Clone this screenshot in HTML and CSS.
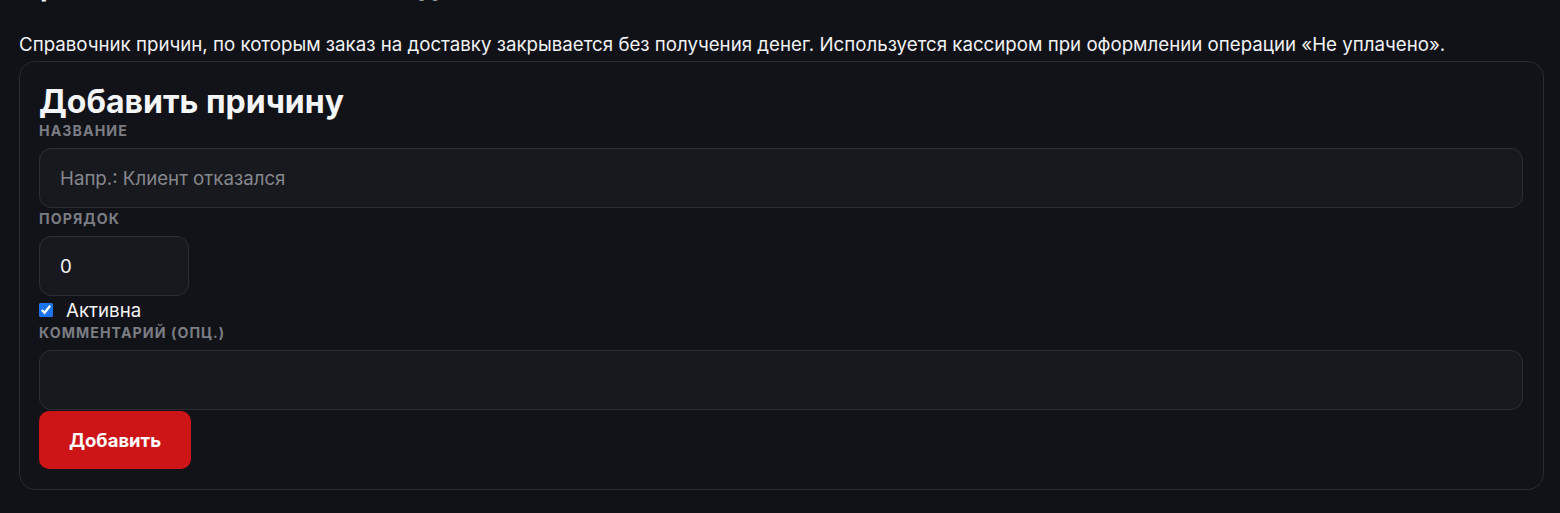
FILE: index.html
```html
<!DOCTYPE html>
<html lang="ru">
<head>
<meta charset="utf-8">
<title>Причины неоплаты</title>
<link rel="stylesheet" href="styles.css">
</head>
<body>
<main class="page">
  <h1 class="page-title">Причины неоплаты заказов доставки</h1>
  <p class="page-desc">Справочник причин, по которым заказ на доставку закрывается без получения денег. Используется кассиром при оформлении операции «Не уплачено».</p>
  <section class="card">
    <h2 class="card-title">Добавить причину</h2>
    <form class="form">
      <label class="field">
        <span class="field-label">Название</span>
        <input class="input" type="text" placeholder="Напр.: Клиент отказался">
      </label>
      <label class="field">
        <span class="field-label">Порядок</span>
        <input class="input input-short" type="text" value="0">
      </label>
      <label class="check">
        <input type="checkbox" checked>
        <span>Активна</span>
      </label>
      <label class="field">
        <span class="field-label">Комментарий (опц.)</span>
        <input class="input" type="text">
      </label>
      <div class="actions">
        <button type="button" class="btn-primary">Добавить</button>
      </div>
    </form>
  </section>
</main>
</body>
</html>
```
FILE: styles.css
```css
* { box-sizing: border-box; }
html, body {
  margin: 0;
  background: #111217;
  color: #f2f3f5;
  font-family: Inter, "Noto Sans", sans-serif;
}
.page {
  padding: 0 16px 0 19px;
}
.page-title {
  margin: -31px 0 0;
  font-size: 28px;
  line-height: 34px;
  font-weight: 700;
  color: #f2f3f5;
}
.page-desc {
  margin: 0;
  padding-top: 29px;
  font-size: 18.7px;
  line-height: 26px;
  color: #f2f3f5;
}
.card {
  margin-top: 3px;
  border: 1px solid #2a2b31;
  border-radius: 16px;
  background: #121318;
  padding: 20px 20px 20px 19px;
}
.card-title {
  margin: 0;
  font-size: 32px;
  line-height: 40px;
  font-weight: 700;
  color: #f4f5f7;
}
.form {
  display: flex;
  flex-direction: column;
  gap: 2px;
}
.field {
  display: flex;
  flex-direction: column;
  gap: 8px;
}
.field-label {
  font-size: 14.2px;
  line-height: 18px;
  font-weight: 700;
  letter-spacing: 0.075em;
  text-transform: uppercase;
  color: #7b7d84;
}
.input {
  height: 60px;
  width: 100%;
  border: 1px solid #2c2d33;
  border-radius: 12px;
  background: #18191e;
  color: #f2f3f5;
  font-family: inherit;
  font-size: 18.7px;
  padding: 0 20px;
  outline: none;
}
.input::placeholder { color: #85878d; }
.input-short { width: 150px; }
.check {
  display: flex;
  align-items: center;
  gap: 13px;
  height: 24px;
  font-size: 18.7px;
  color: #f2f3f5;
}
.check input {
  margin: 0;
  width: 14px;
  height: 14px;
  accent-color: #1a73e8;
}
.actions { display: flex; }
.btn-primary {
  height: 58px;
  width: 152px;
  border: none;
  border-radius: 10px;
  background: #cd1417;
  color: #ffffff;
  font-family: inherit;
  font-size: 18.5px;
  font-weight: 700;
  margin-top: -1px;
}
```
